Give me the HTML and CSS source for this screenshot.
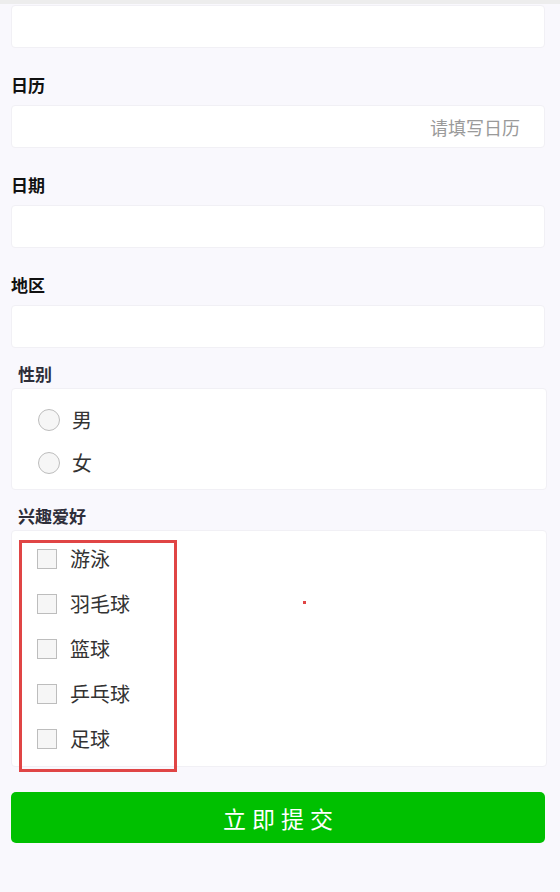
FILE: index.html
```html
<!DOCTYPE html>
<html lang="zh-CN">
<head>
<meta charset="utf-8">
<title>表单</title>
<link rel="stylesheet" href="styles.css">
</head>
<body>
<div class="topbar"></div>
<form class="form">
  <div class="input first"></div>

  <div class="field">
    <div class="label">日历</div>
    <div class="input"><span class="placeholder">请填写日历</span></div>
  </div>

  <div class="field">
    <div class="label">日期</div>
    <div class="input"></div>
  </div>

  <div class="field">
    <div class="label">地区</div>
    <div class="input"></div>
  </div>

  <div class="group">
    <div class="glabel">性别</div>
    <div class="box radios">
      <label class="row"><span class="radio"></span><span class="txt">男</span></label>
      <label class="row"><span class="radio"></span><span class="txt">女</span></label>
    </div>
  </div>

  <div class="group">
    <div class="glabel">兴趣爱好</div>
    <div class="box checks">
      <div class="checkgroup">
        <label class="crow"><span class="check"></span><span class="txt">游泳</span></label>
        <label class="crow"><span class="check"></span><span class="txt">羽毛球</span></label>
        <label class="crow"><span class="check"></span><span class="txt">篮球</span></label>
        <label class="crow"><span class="check"></span><span class="txt">乒乓球</span></label>
        <label class="crow"><span class="check"></span><span class="txt">足球</span></label>
      </div>
      <span class="dot"></span>
    </div>
  </div>

  <button type="button" class="submit">立即提交</button>
</form>
</body>
</html>
```
FILE: styles.css
```css
* { box-sizing: border-box; }
html, body {
  margin: 0;
  padding: 0;
  background: #f9f8fd;
  font-family: "Noto Sans CJK SC", "Noto Sans", sans-serif;
  color: #222;
}
.topbar {
  height: 4px;
  background: #ededed;
}
.form {
  display: flex;
  flex-direction: column;
  padding: 1px 15px 0 11px;
}
.input {
  height: 43px;
  background: #fff;
  border: 1px solid #f1f0f5;
  border-radius: 4px;
  display: flex;
  align-items: center;
  justify-content: flex-end;
  padding-right: 24px;
}
.placeholder {
  font-size: 18px;
  color: #9a9a9a;
}
.field {
  display: flex;
  flex-direction: column;
  gap: 8px;
  margin-top: 25px;
}
.label {
  font-size: 17px;
  line-height: 24px;
  font-weight: 700;
  color: #111;
}
.group {
  display: flex;
  flex-direction: column;
  gap: 2px;
  margin-top: 14px;
}
.glabel {
  font-size: 17px;
  line-height: 24px;
  font-weight: 700;
  color: #2e2e3a;
  padding-left: 7px;
}
.box {
  background: #fff;
  border: 1px solid #f1f0f5;
  border-radius: 4px;
  margin-right: -2px;
}
.radios {
  height: 102px;
  padding: 9px 0 5px 26px;
  display: flex;
  flex-direction: column;
}
.row {
  height: 44px;
  display: flex;
  align-items: center;
  gap: 12px;
}
.radio {
  width: 22px;
  height: 22px;
  border-radius: 50%;
  border: 1px solid #bdbdbd;
  background: #f6f6f6;
}
.txt {
  font-size: 20px;
  line-height: 24px;
  color: #333;
}
.checks {
  position: relative;
  height: 237px;
  padding: 9px 0 0 7px;
}
.checkgroup {
  width: 158px;
  height: 232px;
  border: 3px solid #e04545;
  padding: 4px 0 0 15px;
  display: flex;
  flex-direction: column;
  gap: 21px;
}
.crow {
  height: 24px;
  display: flex;
  align-items: center;
  gap: 13px;
}
.check {
  width: 20px;
  height: 20px;
  border: 1px solid #bdbdbd;
  background: #f6f6f6;
}
.dot {
  position: absolute;
  left: 291px;
  top: 70px;
  width: 3px;
  height: 3px;
  background: #e04545;
}
.submit {
  margin-top: 25px;
  height: 51px;
  border: none;
  border-radius: 5px;
  background: #00c000;
  color: #fff;
  font-family: "Noto Sans CJK SC", "Noto Sans", sans-serif;
  font-size: 23px;
  letter-spacing: 6px;
  padding: 0 0 0 6px;
}
```
